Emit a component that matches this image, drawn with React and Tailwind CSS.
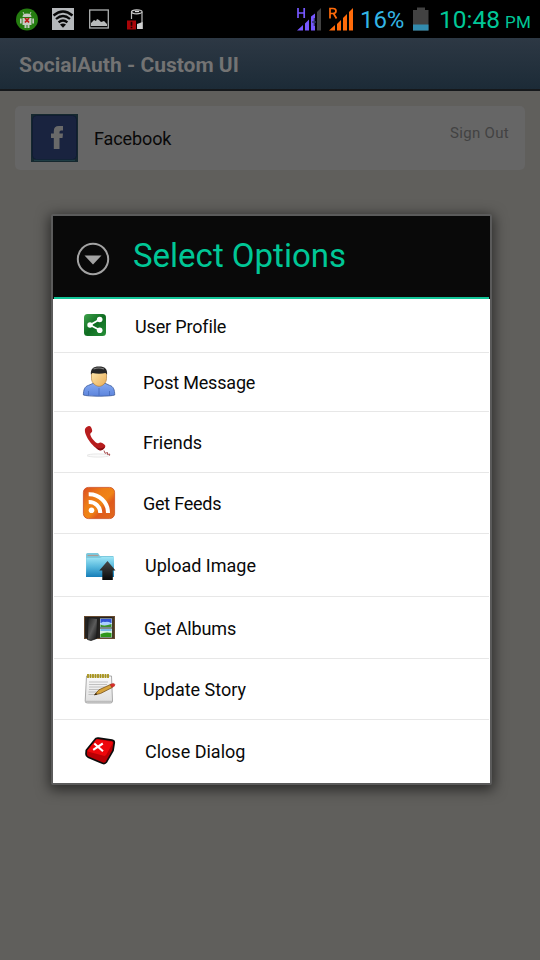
import React from "react";

function Icon({ box, children }) {
  return (
    <svg viewBox={box} className="h-10 w-10 shrink-0" aria-hidden="true">
      {children}
    </svg>
  );
}

const ShareIcon = () => (
  <Icon box="0 0 40 40">
    <defs>
      <linearGradient id="share" x1="0" y1="0" x2="1" y2="1">
        <stop offset="0" stopColor="#3fa24c" />
        <stop offset=".5" stopColor="#0f6d22" />
        <stop offset="1" stopColor="#279038" />
      </linearGradient>
    </defs>
    <rect x="4" y="9" width="22" height="22" rx="3.500" fill="url(#share)" />
    <path d="M19.500 14.500 10 20l10 5.300" fill="none" stroke="#fff" strokeWidth="1.800" />
    <circle cx="19.700" cy="14.500" r="2.800" fill="#fff" />
    <circle cx="10" cy="20" r="2.700" fill="#fff" />
    <circle cx="19.700" cy="25.300" r="2.800" fill="#fff" />
  </Icon>
);

const PersonIcon = () => (
  <Icon box="0 0 40 40">
    <defs>
      <linearGradient id="shirt" x1="0" y1="0" x2="0" y2="1">
        <stop offset="0" stopColor="#84a9f2" />
        <stop offset="1" stopColor="#5c84dc" />
      </linearGradient>
      <linearGradient id="skin" x1="0" y1="0" x2="1" y2="1">
        <stop offset="0" stopColor="#ffe9ae" />
        <stop offset="1" stopColor="#e8ad58" />
      </linearGradient>
    </defs>
    <path d="M3.400 33c0-5 1.300-8.700 5.200-9.700L14 21h10.500l5 2.300c4 1 5.200 4.700 5.200 9.700-4 1.600-27.300 1.600-31.300 0z" fill="url(#shirt)" stroke="#3c5a9a" strokeWidth=".8" />
    <path d="M19 26v7.500M8.500 29v4.500M29.500 29v4.500" stroke="#4165b5" strokeWidth=".7" />
    <path d="M11.500 10q7.500-3 15 0v6.500c0 4.500-4 7.800-7.300 7.800s-7.700-3.300-7.700-7.800z" fill="url(#skin)" stroke="#a8742c" strokeWidth=".6" />
    <path d="M10.900 12.500C10.500 7 13 4.500 19 4.500s8.500 2.500 8.100 8l-1.600-1.500c-4 .9-9 .9-13 0z" fill="#262626" />
    <path d="M13.500 7q5-2 10.500 0" stroke="#858585" strokeWidth="1.200" fill="none" />
  </Icon>
);

const PhoneIcon = () => (
  <Icon box="0 0 40 40">
    <ellipse cx="18" cy="33.500" rx="11" ry="1.600" fill="#fafafa" stroke="#e2e2e2" strokeWidth=".8" />
    <path d="M8.800 4.100c1.500-.5 3 1.700 3.400 4.400.2 2-1.700 2.300-2 3.500.3 3.300 4.800 8.500 7.200 9.300 1.500.2 1.600-1 3.200-.8 2.200.4 4.600 2.300 4.800 3.600-.3 2.600-2.700 4.300-5.100 4.200C14.600 27.200 4.300 14.600 4.900 7.500c.4-1.700 2-2.900 3.900-3.400z" fill="#b71d1e" />
    <path d="M15.500 24.500c2 2 5.500 3 9.500 0-1 2.500-3 4-5 4-2-.5-3.500-2-4.500-4z" fill="#860e13" />
    <path d="M24 28.500l1 2.800 2.500-.8v2l2.200-.5-.2 1.700" fill="none" stroke="#a14344" strokeWidth=".9" />
  </Icon>
);

const FeedIcon = () => (
  <Icon box="0 0 40 40">
    <defs>
      <linearGradient id="feed" x1="0" y1="0" x2="1" y2="1">
        <stop offset="0" stopColor="#dc4c20" />
        <stop offset=".35" stopColor="#ee7d16" />
        <stop offset=".55" stopColor="#f08415" />
        <stop offset=".68" stopColor="#df5a1c" />
        <stop offset="1" stopColor="#e06a1c" />
      </linearGradient>
    </defs>
    <rect x="3.400" y="4.400" width="31.200" height="31.200" rx="5" fill="url(#feed)" stroke="#cc4f24" strokeWidth=".8" />
    <circle cx="11.500" cy="27.300" r="2.800" fill="#fff" />
    <path d="M8.700 19a11 11 0 0 1 11.600 11M8.700 11.200A18.800 18.800 0 0 1 28 30" fill="none" stroke="#fff" strokeWidth="4" />
  </Icon>
);

const FolderIcon = () => (
  <Icon box="0 0 40 40">
    <defs>
      <linearGradient id="folder" x1="0" y1="0" x2="0" y2="1">
        <stop offset="0" stopColor="#9ee6f6" />
        <stop offset=".5" stopColor="#55b7dc" />
        <stop offset="1" stopColor="#167db8" />
      </linearGradient>
      <linearGradient id="arrow" x1="0" y1="0" x2="0" y2="1">
        <stop offset="0" stopColor="#4a4a4a" />
        <stop offset="1" stopColor="#080808" />
      </linearGradient>
    </defs>
    <path d="M6 8.500q0-1.500 1.500-1.500H18l2 3h13.500v21H6z" fill="#7cc9de" />
    <path d="M7.500 9.500h11" stroke="#ad9a91" strokeWidth="1.200" />
    <path d="M6.500 12H20l2-1h12v20H6z" fill="url(#folder)" />
    <path d="M27.500 15l8 9.500h-2.700V34h-10.500v-9.500h-3z" fill="url(#arrow)" />
  </Icon>
);

const AlbumIcon = () => (
  <Icon box="0 0 40 40">
    <defs>
      <linearGradient id="cover" x1="0" y1="0" x2="1" y2="1">
        <stop offset="0" stopColor="#1c1c1c" />
        <stop offset=".5" stopColor="#5b5b5b" />
        <stop offset="1" stopColor="#0a0a0a" />
      </linearGradient>
    </defs>
    <rect x="4.500" y="8.500" width="30" height="22" fill="#242220" stroke="#66492e" />
    <path d="M33 9.500v20.500" stroke="#6b532e" strokeWidth="1" />
    <rect x="20" y="10.500" width="12" height="9" fill="#cce6f7" />
    <rect x="20.500" y="11" width="11" height="4" fill="#3153d5" />
    <path d="M21 15q2-2 4-1 3-1 6 1v2H21z" fill="#a9d0ff" />
    <path d="M20.500 16.500q4 2 11-.5V19h-11z" fill="#3c922b" />
    <rect x="20" y="20.500" width="12" height="9" fill="#d9f1e5" />
    <path d="M20.500 21h11v2h-11z" fill="#79b8e6" />
    <path d="M20.500 26q5-2.500 11-1V29h-11z" fill="#2f971b" />
    <path d="M8 9.500l9.500 1-.8 20L11 32.500l-3.500-1z" fill="url(#cover)" stroke="#191919" strokeWidth=".8" />
  </Icon>
);

const NoteIcon = () => (
  <Icon box="0 0 40 40">
    <defs>
      <linearGradient id="paper" x1="0" y1="0" x2="0" y2="1">
        <stop offset="0" stopColor="#fafafa" />
        <stop offset="1" stopColor="#dedede" />
      </linearGradient>
    </defs>
    <path d="M6.500 6h25l1 25q0 2-2 2h-23q-2.500 0-2.300-2z" fill="url(#paper)" stroke="#969696" strokeWidth=".8" />
    <path d="M5.500 31.500h26.500" stroke="#bdbdbd" strokeWidth="1.500" />
    <path d="M9 12h19M9 14.500h18M9 17h16M9 19.500h14M8.500 22h9M8.500 24.500h6" stroke="#b4b4b4" strokeWidth=".8" />
    <path d="M8 4v4M10.500 4v4M13 4v4M15.500 4v4M18 4v4M20.500 4v4M23 4v4M25.500 4v4M28 4v4" stroke="#a79319" strokeWidth="1.800" />
    <path d="M14.500 24.800l4.500-5L30.500 14.500l1.700 3L20.500 23.500z" fill="#d6a33c" stroke="#775019" strokeWidth=".8" />
    <path d="M14 25.200l2-2.200 1.300 1.500z" fill="#2e2213" />
    <path d="M30 14.500q4-2.200 4.900 0 .4 1.800-3 3z" fill="#d82e29" stroke="#9c2a22" strokeWidth=".4" />
  </Icon>
);

const CloseIcon = () => (
  <Icon box="0 0 40 40">
    <path d="M15 7.500Q16 5.700 18.500 6.100l13.500 2q2.600.6 2.200 3l-1.200 7.500-6.600 11.500q-1.300 2-3.800 1.200L8.200 25.300Q6 24.300 6 22l.3-3.700z" fill="#b90005" stroke="#0c0c0c" strokeWidth="1.700" strokeLinejoin="round" />
    <path d="M15.600 8.500q.7-1.300 2.200-1.100l14 2.300q1.500.4.800 1.800l-6.300 11.300q-1 1.500-2.600 1L8.500 19.800q-1.500-.6-.7-1.800z" fill="#ee070b" />
    <path d="M14.300 11.500l8.700 7.800M22.800 11.500 13.200 17.800" stroke="#fff" strokeWidth="2.100" />
  </Icon>
);

const options = [
  { label: "User Profile", Glyph: ShareIcon, row: "h-[54px]", icon: "mt-[6px]", text: "ml-[15px] tracking-[-0.16px]" },
  { label: "Post Message", Glyph: PersonIcon, row: "h-[59px]", icon: "mt-[9px]", text: "ml-[23px] tracking-[-0.19px]" },
  { label: "Friends", Glyph: PhoneIcon, row: "h-[61px]", icon: "mt-[10px]", text: "ml-[23px]" },
  { label: "Get Feeds", Glyph: FeedIcon, row: "h-[61px]", icon: "mt-[10px]", text: "ml-[23px] tracking-[-0.25px]" },
  { label: "Upload Image", Glyph: FolderIcon, row: "h-[63px]", icon: "mt-[12px]", text: "ml-[25px]" },
  { label: "Get Albums", Glyph: AlbumIcon, row: "h-[62px]", icon: "mt-[11px]", text: "ml-[24px] tracking-[-0.12px]" },
  { label: "Update Story", Glyph: NoteIcon, row: "h-[61px]", icon: "mt-[11px]", text: "ml-[23px]" },
  { label: "Close Dialog", Glyph: CloseIcon, row: "h-[63px]", icon: "mt-[12px]", text: "ml-[25px] -mt-[2px]" },
];

function StatusBar() {
  return (
    <header className="flex h-[38px] items-center bg-black">
      <svg width="23" height="24" viewBox="0 0 23 24" className="ml-4">
        <circle cx="11" cy="12.500" r="11" fill="#257c10" />
        <path d="M7 5l1.500 3M15 5l-1.500 3" stroke="#bec8ba" />
        <path d="M6.500 10q0-3.500 4.500-3.500t4.500 3.500zM6.500 11h9v7h-2v3h-2v-3h-1v3h-2v-3h-2zM4 11.500h1.700v5H4zM16.300 11.500H18v5h-1.700z" fill="#c5cbc2" />
        <path d="M9 11l4 4.500M13 11l-4 4.500" stroke="#bb1a17" strokeWidth="1.800" />
      </svg>
      <svg width="22" height="22" viewBox="0 0 22 22" className="ml-[13px]">
        <path d="M0 0h22v22H0z" fill="#b5b8bb" />
        <path d="M1.500 7.500q9.500-8 19 0M4 11q7-6 14 0M6.600 14.300q4.400-3.700 8.800 0" stroke="#080808" strokeWidth="2.300" fill="none" />
        <path d="M8 16.500q3-2 6 0l-3 3.300z" fill="#080808" />
      </svg>
      <svg width="20" height="20" viewBox="0 0 20 20" className="ml-[15px]">
        <rect x=".7" y="1" width="18.600" height="18" fill="none" stroke="#aeb1b1" strokeWidth="1.300" />
        <path d="M2 17v-3l3-3 2 1 1-2 2 1 2 2 3-1 3 3v2z" fill="#b8baba" />
      </svg>
      <svg width="18" height="21" viewBox="0 0 18 21" className="ml-[18px]">
        <path d="M4.500 10V3M15 3v17" fill="none" stroke="#bbb" strokeWidth="1.200" />
        <ellipse cx="9.800" cy="2.800" rx="5.300" ry="2" fill="#151515" stroke="#ccc" strokeWidth="1.200" />
        <path d="M8 2.500h4" stroke="#ddd" strokeWidth="1.200" />
        <path d="M10 15l5.600-2v7H10z" fill="#d0d0d0" />
        <path d="M0 11.500h9v9H0z" fill="#a90407" />
        <path d="M4.500 12.800v4M4.500 17.800v1.500" stroke="#160000" strokeWidth="1.700" />
      </svg>
      <svg width="25" height="24" viewBox="0 0 25 24" className="ml-[152px]">
        <path d="M1 1v10M7.200 1v10M1 6h6.200" stroke="#7657ff" strokeWidth="1.700" fill="none" />
        <path d="M0 23.500 6 18v5.500zM8 23.500v-7l4-4v11zM14 23.500V9.500l4-3v17z" fill="#7657ff" />
        <path d="M20 5l4-4v22.500h-4z" fill="#424242" />
        <path d="M17.300 11v8M15 15h4" stroke="#34346a" strokeWidth="1.300" />
      </svg>
      <svg width="25" height="24" viewBox="0 0 25 24" className="ml-[7px]">
        <path d="M1 11.500v-10h3q3 0 3 2.500t-3 2.500H1M4.500 6.500l3 5" stroke="#ff6b0a" strokeWidth="1.700" fill="none" />
        <path d="M0 23.500 6 18v5.500zM8 23.500V17l4-4v10.500zM14 23.500V11l4-4v16.500zM20 23.500V5l4-4v22.500z" fill="#ff6b0a" />
      </svg>
      <span className="ml-[6px] mt-px w-[53px] whitespace-nowrap text-[24px] leading-[38px] tracking-[-0.1px] text-[#33b5e5]">16%</span>
      <svg width="16" height="24" viewBox="0 0 16 24" className="-mt-px">
        <path d="M0 3h4V.500h8V3h3.500v20.500H0z" fill="#424242" />
        <path d="M0 17.500h15.500v6H0z" fill="#328caf" />
      </svg>
      <span className="ml-[10px] mt-px whitespace-nowrap text-[24.500px] leading-[38px] text-[#00c797]">10:48</span>
      <span className="ml-[5px] mt-[6px] whitespace-nowrap text-[17px] leading-[33px] tracking-[0.3px] text-[#00c797]">PM</span>
    </header>
  );
}

function OptionsDialog() {
  return (
    <section className="absolute left-[51px] top-[214px] w-[441px] rounded-[2px] border-2 border-[#5b5b5b] bg-white shadow-[0_3px_13px_2px_rgba(0,0,0,0.55)]">
      <div className="h-[83px] bg-[#090909]">
        <div className="flex h-[81px]">
          <svg width="34" height="34" viewBox="0 0 34 34" className="ml-[23px] mt-[26px]">
            <circle cx="17" cy="17" r="15.200" fill="none" stroke="#a3a3a3" strokeWidth="2" />
            <path d="M8.500 13.500h17L17 22.500z" fill="#a3a3a3" />
          </svg>
          <h2 className="ml-[23px] mt-[20px] whitespace-nowrap text-[33px] font-normal leading-[40px] text-[#00c796]">Select Options</h2>
        </div>
        <div className="mx-px h-0.5 bg-[#12c598]" />
      </div>
      <ul className="px-px">
        {options.map(({ label, Glyph, row, icon, text }) => (
          <li key={label} className={`flex border-b border-[#e7e7e7] pl-[26px] last:border-b-0 ${row}`}>
            <div className={icon}><Glyph /></div>
            <div className="flex items-center pt-[2px]">
              <span className={`whitespace-nowrap text-[18px] leading-6 text-[#090909] ${text}`}>{label}</span>
            </div>
          </li>
        ))}
      </ul>
    </section>
  );
}

export default function App() {
  return (
    <div className="relative h-[960px] w-[540px] overflow-hidden bg-[#605f5c] font-['Roboto',sans-serif]">
      <StatusBar />
      <div className="flex h-[53px] items-center border-b-2 border-[#15181b] bg-linear-to-b from-[#2d3844] to-[#1c2b37] pl-[19px]">
        <h1 className="mt-[3px] whitespace-nowrap text-[21px] font-bold leading-6 text-[#737373]">SocialAuth - Custom UI</h1>
      </div>
      <main className="px-[15px] pt-[15px]">
        <div className="flex h-16 items-start rounded-[5px] bg-[#666]">
          <svg width="47" height="48" viewBox="0 0 47 48" className="ml-4 mt-2">
            <path d="M0 0h47v48H0z" fill="#15282f" />
            <rect x="1.500" y="1.500" width="44" height="44" rx="4" fill="#19233f" stroke="#101c31" />
            <path d="M3 46.300h41" stroke="#22434a" strokeWidth="1" />
            <path d="M22.800 35V24H20v-4.500h2.800V17q0-5 5-5H32v4.500h-2q-1.500 0-1.500 1.500v1.500H32l-.5 4.500h-3v11z" fill="#696969" />
          </svg>
          <span className="ml-4 mt-[21px] text-[18px] leading-6 tracking-[-0.1px] text-[#090909]">Facebook</span>
          <span className="ml-auto mr-4 mt-[17px] whitespace-nowrap text-[15px] leading-5 tracking-[0.3px] text-[#424242]">Sign Out</span>
        </div>
      </main>
      <OptionsDialog />
    </div>
  );
}
